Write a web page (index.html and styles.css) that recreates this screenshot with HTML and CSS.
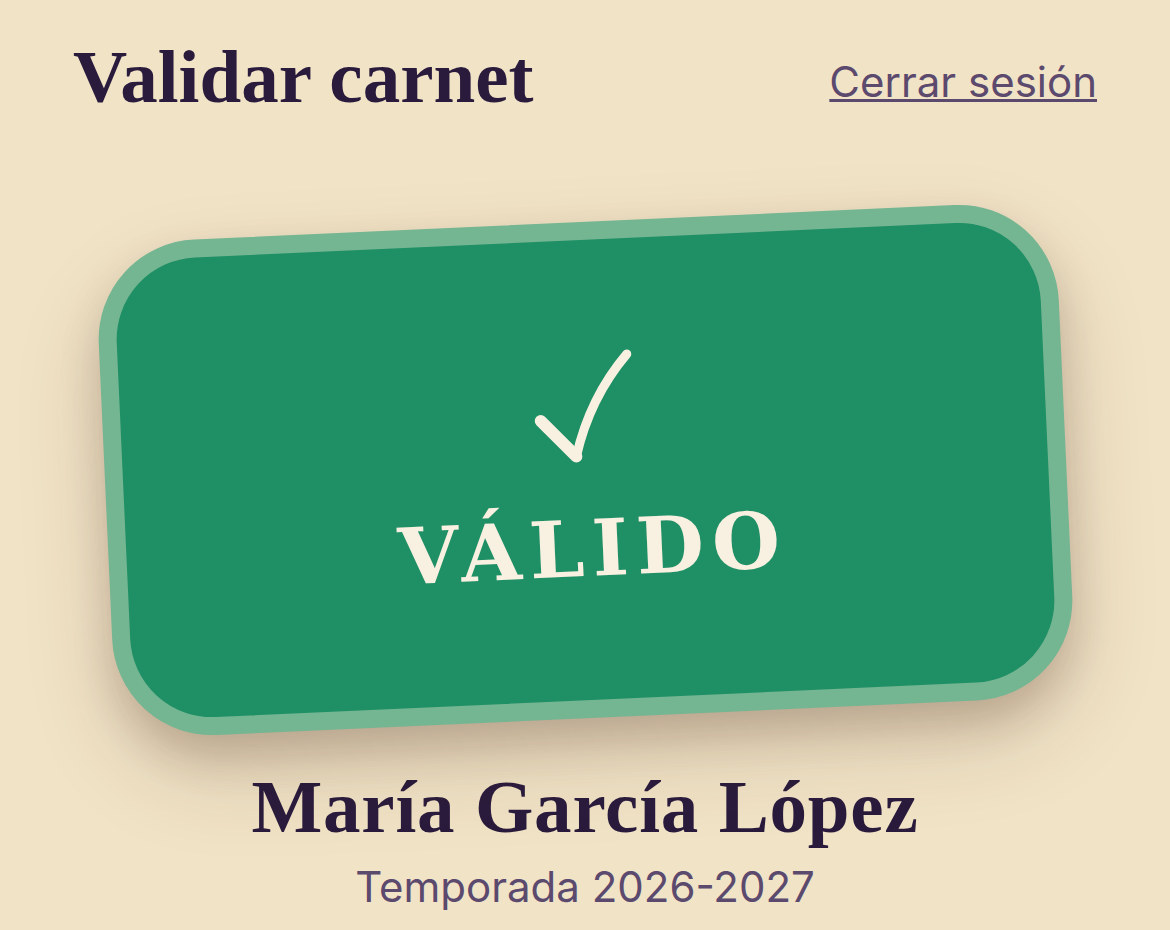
FILE: index.html
```html
<!DOCTYPE html>
<html lang="es">
<head>
<meta charset="utf-8">
<title>Validar carnet</title>
<link rel="stylesheet" href="styles.css">
</head>
<body>
<header class="top">
  <h1 class="title">Validar carnet</h1>
  <a class="logout" href="#">Cerrar sesión</a>
</header>
<main class="result">
  <div class="card">
    <svg class="check" viewBox="0 0 110 120" aria-hidden="true">
      <path d="M12 73 L46 110" fill="none" stroke="#f8f0e0" stroke-width="12" stroke-linecap="round"/>
      <path d="M46 110 Q 62 52 101 10" fill="none" stroke="#f8f0e0" stroke-width="9" stroke-linecap="round"/>
    </svg>
    <div class="status">VÁLIDO</div>
  </div>
  <h2 class="name">María García López</h2>
  <p class="season">Temporada 2026-2027</p>
</main>
</body>
</html>
```
FILE: styles.css
```css
html, body {
  margin: 0;
  padding: 0;
}
body {
  background: #f1e3c6;
  width: 1170px;
  height: 930px;
  overflow: hidden;
  font-family: "Inter", "Liberation Sans", sans-serif;
}
.top {
  display: flex;
  justify-content: space-between;
  align-items: flex-start;
  padding: 39px 73px 0 73px;
}
.title {
  margin: 0;
  font-family: "Liberation Serif", serif;
  font-weight: 700;
  font-size: 75px;
  line-height: 1;
  color: #2a1b3d;
}
.logout {
  margin-top: 18px;
  font-size: 42px;
  line-height: 1.2;
  color: #5b4a6e;
  text-decoration: underline;
  text-decoration-thickness: 3px;
  text-underline-offset: 2px;
}
.result {
  display: flex;
  flex-direction: column;
  align-items: center;
}
.card {
  margin-top: 108px;
  width: 925px;
  height: 454px;
  padding-bottom: 6px;
  border: 18px solid #74b592;
  border-radius: 100px;
  background: #1f8f65;
  transform: rotate(-2.6deg);
  box-shadow: 0 22px 40px rgba(70, 40, 25, 0.2), 0 40px 90px rgba(70, 40, 25, 0.16);
  display: flex;
  flex-direction: column;
  align-items: center;
  justify-content: center;
  gap: 44px;
}
.check {
  width: 110px;
  height: 120px;
  display: block;
}
.status {
  font-family: "DejaVu Serif", serif;
  font-weight: 700;
  font-size: 78px;
  line-height: 1;
  letter-spacing: 8px;
  margin-right: -8px;
  color: #f8f0e0;
}
.name {
  margin: 48px 0 0 0;
  font-family: "Liberation Serif", serif;
  font-weight: 700;
  font-size: 75px;
  line-height: 1.1;
  letter-spacing: 0.8px;
  color: #2a1b3d;
}
.season {
  margin: 13px 0 0 0;
  font-size: 42px;
  line-height: 1.2;
  color: #5b4a6e;
}
```
